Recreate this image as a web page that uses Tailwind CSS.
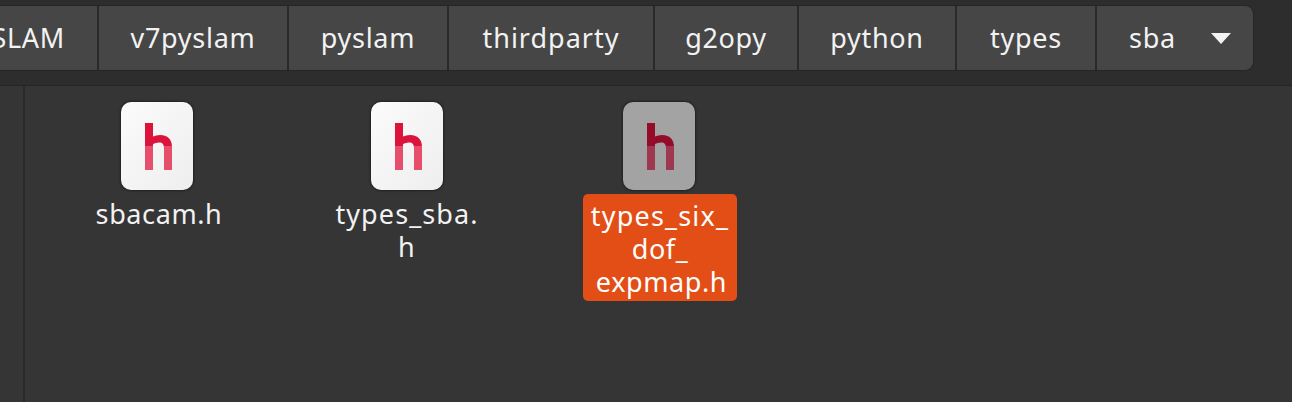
<!DOCTYPE html>
<html lang="en">
<head>
    <meta charset="UTF-8">
    <title>sba</title>
    <script src="https://cdn.jsdelivr.net/npm/@tailwindcss/browser@4"></script>
</head>
<body class="w-[1292px] h-[402px] overflow-hidden bg-[#353535] font-['Noto_Sans',sans-serif] text-white">
    <header class="h-[86px] bg-[#2d2d2d] border-b border-[#252525] pt-[5px] overflow-hidden">
        <nav class="flex h-[66px] w-[1254px] border border-[#252525] rounded-r-[9px] border-l-0 bg-[#464646] text-[27px] tracking-[0.7px] text-[#f2f2f2]">
            <div class="w-[99px] shrink-0 border-r-2 border-[#2a2a2a] flex justify-end items-center pr-[32px] overflow-hidden"><span class="shrink-0">SLAM</span></div>
            <div class="w-[190px] border-r-2 border-[#2a2a2a] flex justify-center items-center">v7pyslam</div>
            <div class="w-[160px] border-r-2 border-[#2a2a2a] flex justify-center items-center">pyslam</div>
            <div class="w-[206px] border-r-2 border-[#2a2a2a] flex justify-center items-center tracking-[1px]">thirdparty</div>
            <div class="w-[144px] border-r-2 border-[#2a2a2a] flex justify-center items-center">g2opy</div>
            <div class="w-[158px] border-r-2 border-[#2a2a2a] flex justify-center items-center">python</div>
            <div class="w-[140px] border-r-2 border-[#2a2a2a] flex justify-center items-center">types</div>
            <div class="flex-1 flex items-center pl-[32px] justify-between pr-[22px]">
                <span>sba</span>
                <svg width="20" height="11" viewBox="0 0 20 11"><path d="M0 0H20L10 11Z" fill="#f2f2f2"/></svg>
            </div>
        </nav>
    </header>
    <div class="flex h-[316px]">
        <aside class="w-[25px] bg-[#353535] border-r-2 border-[#2a2a2a]"></aside>
        <main class="flex-1 flex items-start pt-[16px] text-[27px] tracking-[0.6px] leading-[33px] text-center">
            <div class="ml-[57px] w-[150px] flex flex-col items-center">
                <div class="w-[72px] h-[88px] rounded-[10px] bg-gradient-to-br from-[#fbfbfb] to-[#eeeeee] shadow-[0_0_3px_rgba(0,0,0,0.8)] flex items-center justify-center">
                    <svg class="ml-[2px]" width="27" height="47" viewBox="0 0 27 47"><path d="M0 0H8V13.5Q11 12 15 12C23.5 12 27 17 27 24V47H19V25C19 21.5 17.5 19.5 14 19.5Q10.5 19.5 8 21V47H0Z" fill="#dc143c"/><path d="M0 23H8V47H0ZM19 23H27V47H19Z" fill="#e64e6c"/></svg>
                </div>
                <div class="mt-[7px] ml-[4px] text-[#f2f2f2]">sbacam.h</div>
            </div>
            <div class="ml-[100px] w-[150px] flex flex-col items-center">
                <div class="w-[72px] h-[88px] rounded-[10px] bg-gradient-to-br from-[#fbfbfb] to-[#eeeeee] shadow-[0_0_3px_rgba(0,0,0,0.8)] flex items-center justify-center">
                    <svg class="ml-[2px]" width="27" height="47" viewBox="0 0 27 47"><path d="M0 0H8V13.5Q11 12 15 12C23.5 12 27 17 27 24V47H19V25C19 21.5 17.5 19.5 14 19.5Q10.5 19.5 8 21V47H0Z" fill="#dc143c"/><path d="M0 23H8V47H0ZM19 23H27V47H19Z" fill="#e64e6c"/></svg>
                </div>
                <div class="mt-[7px] tracking-[1.1px] text-[#f2f2f2]">types_sba.<br>h</div>
            </div>
            <div class="ml-[101px] w-[154px] flex flex-col items-center">
                <div class="mr-[2px] w-[72px] h-[88px] rounded-[10px] bg-[#a3a3a3] shadow-[0_0_3px_rgba(0,0,0,0.8)] flex items-center justify-center">
                    <svg class="ml-[2px]" width="27" height="47" viewBox="0 0 27 47"><path d="M0 0H8V13.5Q11 12 15 12C23.5 12 27 17 27 24V47H19V25C19 21.5 17.5 19.5 14 19.5Q10.5 19.5 8 21V47H0Z" fill="#950c28"/><path d="M0 23H8V47H0ZM19 23H27V47H19Z" fill="#9e3850"/></svg>
                </div>
                <div class="mt-[4px] w-[154px] h-[107px] rounded-[5px] bg-[#e24e16] text-white pt-[5px]"><span class="tracking-[1.2px]">types_six_</span><br>dof_<br><span class="ml-[3px]">expmap.h</span></div>
            </div>
        </main>
    </div>
</body>
</html>
